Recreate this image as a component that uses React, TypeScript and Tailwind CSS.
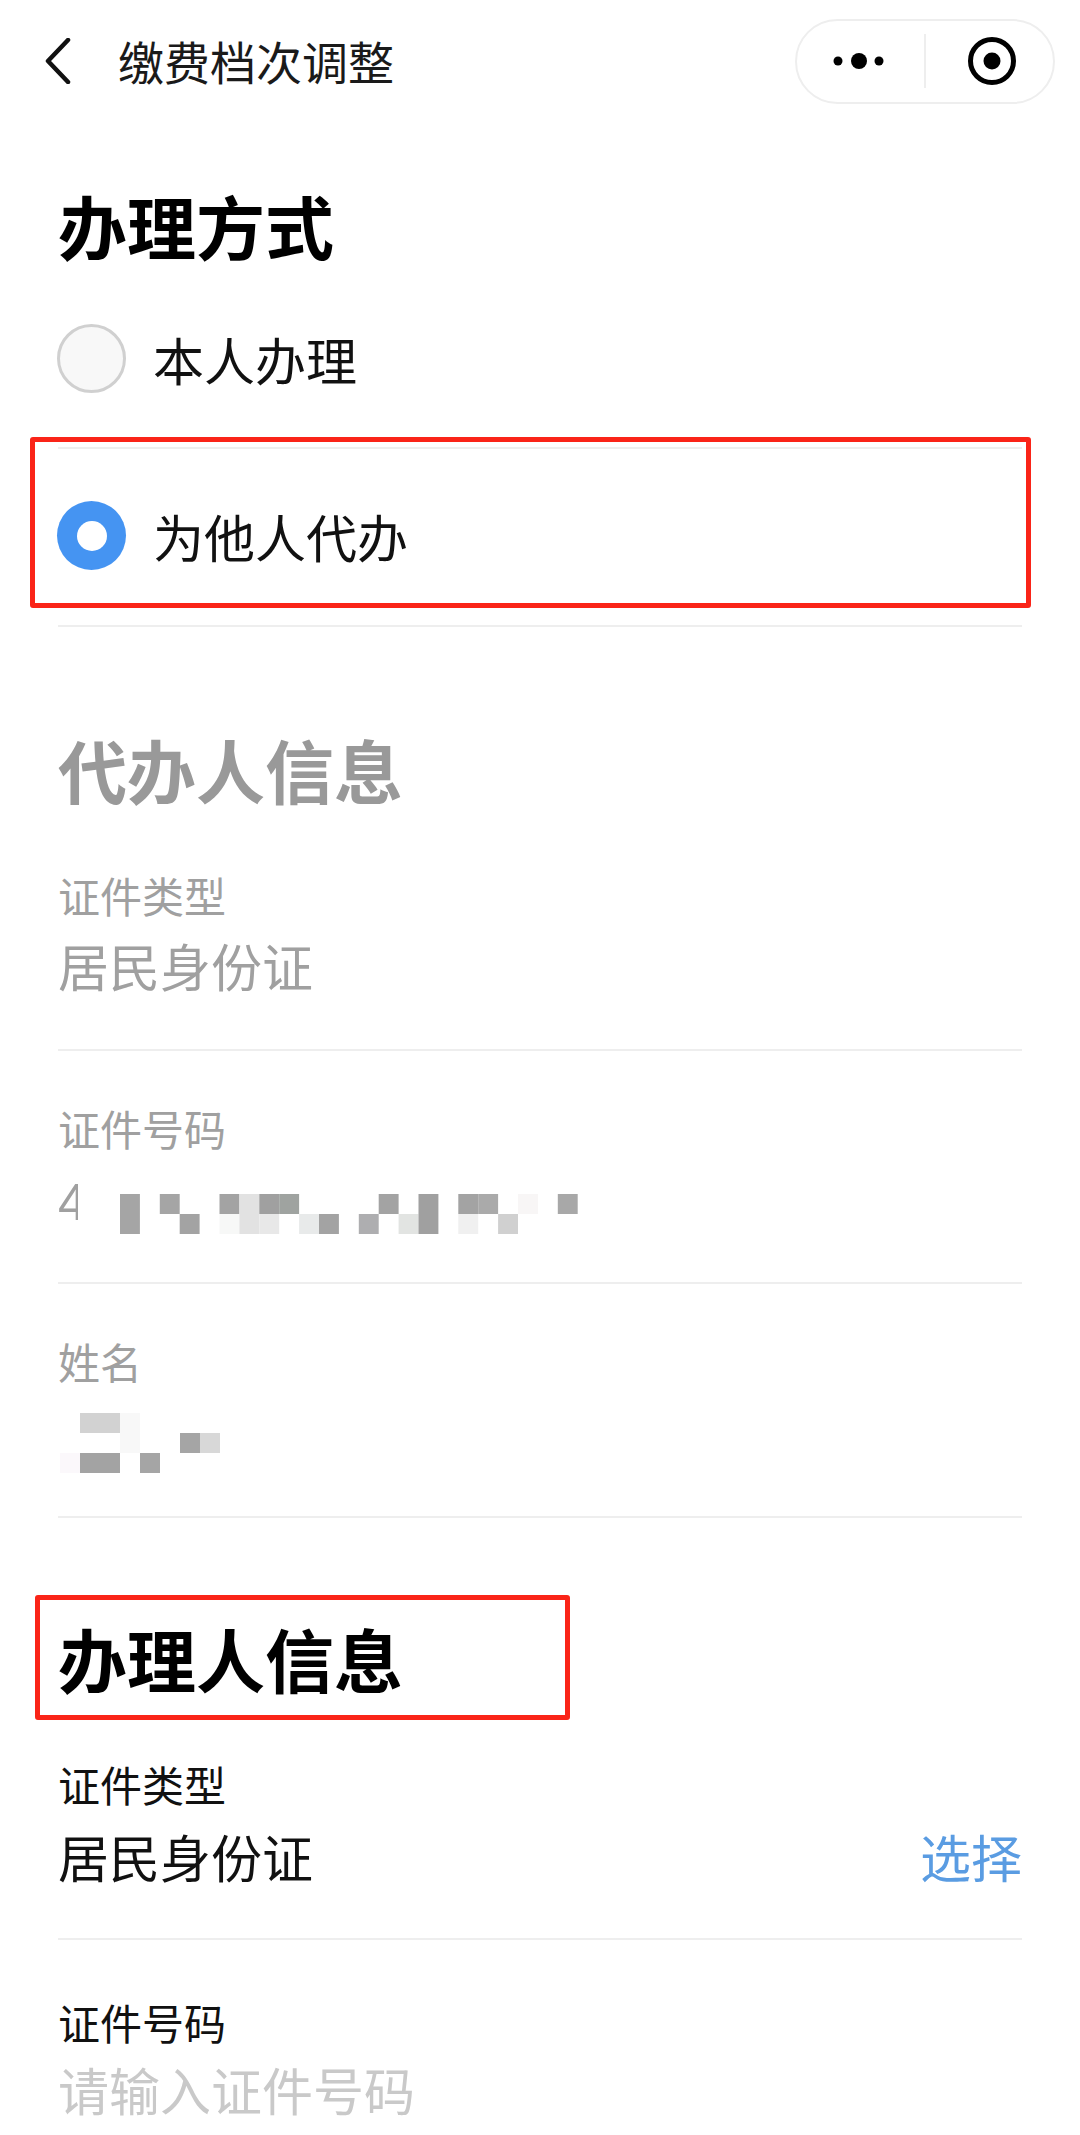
import React from "react";

const FONT = "font-['PingFang_SC','Noto_Sans_CJK_SC','Noto_Sans',sans-serif]";

type Cell = [number, number, string, number?];

function Mosaic({ width, height, cells, size = 20 }: { width: number; height: number; cells: Cell[]; size?: number }) {
  return (
    <svg width={width} height={height} viewBox={`0 0 ${width} ${height}`} className="block shrink-0">
      {cells.map(([c, r, fill, span], i) => (
        <rect key={i} x={c * size} y={r * 20} width={size} height={(span ?? 1) * 20} fill={fill} />
      ))}
    </svg>
  );
}

const idCells: Cell[] = [
  [0, 0, "#a5a5a5", 2],
  [2, 0, "#a5a5a5"],
  [3, 1, "#a3a3a3"],
  [5, 0, "#a3a3a3"],
  [5, 1, "#f7f8f7"],
  [6, 0, "#e2e2e2"],
  [6, 1, "#e2e2e2"],
  [7, 0, "#a0a0a0"],
  [7, 1, "#e8e8e8"],
  [8, 0, "#9fa3a0"],
  [9, 1, "#e8eaea"],
  [10, 1, "#a3a3a3"],
  [12, 1, "#aeaeb0"],
  [13, 0, "#a3a3a3"],
  [14, 1, "#e2e4e2"],
  [15, 0, "#a0a0a0", 2],
  [17, 0, "#a3a3a3"],
  [17, 1, "#f0f0f0"],
  [18, 0, "#aaaaaa"],
  [19, 1, "#d0d0d0"],
  [20, 0, "#f8f6f6"],
  [22, 0, "#a8a8a8"],
];

const nameCells: Cell[] = [
  [1, 0, "#d2d2d2"],
  [2, 0, "#d2d2d2"],
  [3, 0, "#f8f8f8"],
  [3, 1, "#f8f8f8"],
  [6, 1, "#a5a5a5"],
  [7, 1, "#d8d8d8"],
  [0, 2, "#fbf8fb"],
  [1, 2, "#a3a3a3"],
  [2, 2, "#a3a3a3"],
  [4, 2, "#a5a5a5"],
];

function Divider({ className = "" }: { className?: string }) {
  return <div className={`h-[2px] bg-[#eeeeee] ${className}`} />;
}

function SectionTitle({ children, color = "text-black" }: { children: React.ReactNode; color?: string }) {
  return <h2 className={`h-[70px] text-[69px] leading-[70px] font-bold ${color}`}>{children}</h2>;
}

function Radio({ checked, label }: { checked?: boolean; label: string }) {
  return (
    <div className="flex h-[69px] items-center">
      {checked ? (
        <span className="ml-[-1px] flex h-[69px] w-[69px] items-center justify-center rounded-full bg-[#4594f2]">
          <span className="h-[30px] w-[30px] rounded-full bg-white" />
        </span>
      ) : (
        <span className="ml-[-1px] h-[69px] w-[69px] rounded-full border-[3px] border-[#d0d0d0] bg-[#f8f8f8]" />
      )}
      <span className="ml-[27px] text-[51px] leading-[60px] text-[#111111]">{label}</span>
    </div>
  );
}

export default function App() {
  return (
    <div className={`h-[2135px] w-[1080px] overflow-hidden bg-white ${FONT}`}>
      <header className="flex h-[122px] items-center pl-[44px] pr-[25px]">
        <svg width="28" height="46" viewBox="0 0 28 46" className="shrink-0">
          <path d="M24 2 L4 23 L24 44" fill="none" stroke="#111" strokeWidth="4.5" strokeLinecap="round" strokeLinejoin="round" />
        </svg>
        <h1 className="ml-[46px] mt-[-2px] flex-1 text-[46px] leading-[60px] text-[#1a1a1a]">缴费档次调整</h1>
        <div className="flex h-[85px] w-[260px] items-center rounded-full border-2 border-[#eeeeee] bg-white">
          <div className="flex flex-1 items-center justify-center">
            <svg width="64" height="20" viewBox="0 0 64 20" className="ml-[-3px]">
              <circle cx="11" cy="10" r="4.5" fill="#000" />
              <circle cx="32" cy="10" r="8" fill="#000" />
              <circle cx="52" cy="10" r="4.5" fill="#000" />
            </svg>
          </div>
          <div className="h-[54px] w-[2px] bg-[#eeeeee]" />
          <div className="flex flex-1 items-center justify-center">
            <svg width="50" height="50" viewBox="0 0 50 50" className="mr-[-5px]">
              <circle cx="25" cy="25" r="21.5" fill="none" stroke="#000" strokeWidth="5" />
              <circle cx="25" cy="25" r="8.5" fill="#000" />
            </svg>
          </div>
        </div>
      </header>

      <main className="px-[58px]">
        <div className="mt-[68px]">
          <SectionTitle>办理方式</SectionTitle>
        </div>
        <div className="mt-[64px]">
          <Radio label="本人办理" />
        </div>
        <div className="relative mt-[54px]">
          <Divider />
          <div className="mt-[52px]">
            <Radio checked label="为他人代办" />
          </div>
          <div className="absolute left-[-28px] right-[-9px] top-[-10px] h-[171px] rounded-[3px] border-[5px] border-[#fa2418]" />
        </div>
        <Divider className="mt-[55px]" />

        <div className="mt-[107px]">
          <SectionTitle color="text-[#999999]">代办人信息</SectionTitle>
        </div>

        <div className="mt-[66px] h-[50px] text-[42px] leading-[50px] text-[#a0a0a0]">证件类型</div>
        <div className="mt-[15px] h-[60px] text-[51px] leading-[60px] text-[#a0a0a0]">居民身份证</div>
        <Divider className="mt-[54px]" />

        <div className="mt-[52px] h-[50px] text-[42px] leading-[50px] text-[#a0a0a0]">证件号码</div>
        <div className="mt-[24px] flex h-[57px] items-start">
          <span className="h-[52px] w-[20px] overflow-hidden text-[51px] leading-[52px] font-['Liberation_Sans',sans-serif] text-[#a0a0a0]">4</span>
          <div className="ml-[42px] mt-[17px]">
            <Mosaic width={458} height={40} cells={idCells} size={19.9} />
          </div>
        </div>
        <Divider className="mt-[48px]" />

        <div className="mt-[52px] h-[50px] text-[42px] leading-[50px] text-[#a0a0a0]">姓名</div>
        <div className="ml-[2px] mt-[27px]">
          <Mosaic width={180} height={60} cells={nameCells} />
        </div>
        <Divider className="mt-[43px]" />

        <div className="relative mt-[105px]">
          <SectionTitle>办理人信息</SectionTitle>
          <div className="absolute left-[-23px] top-[-28px] h-[125px] w-[535px] rounded-[3px] border-[5px] border-[#fa2418]" />
        </div>

        <div className="mt-[66px] h-[50px] text-[42px] leading-[50px] text-[#111111]">证件类型</div>
        <div className="mt-[17px] flex h-[60px] items-center justify-between text-[51px] leading-[60px]">
          <span className="text-[#111111]">居民身份证</span>
          <span className="text-[#5a9ce2]">选择</span>
        </div>
        <Divider className="mt-[52px]" />

        <div className="mt-[57px] h-[50px] text-[42px] leading-[50px] text-[#111111]">证件号码</div>
        <div className="mt-[12px] h-[60px] text-[51px] leading-[60px] text-[#c9c9c9]">请输入证件号码</div>
      </main>
    </div>
  );
}
